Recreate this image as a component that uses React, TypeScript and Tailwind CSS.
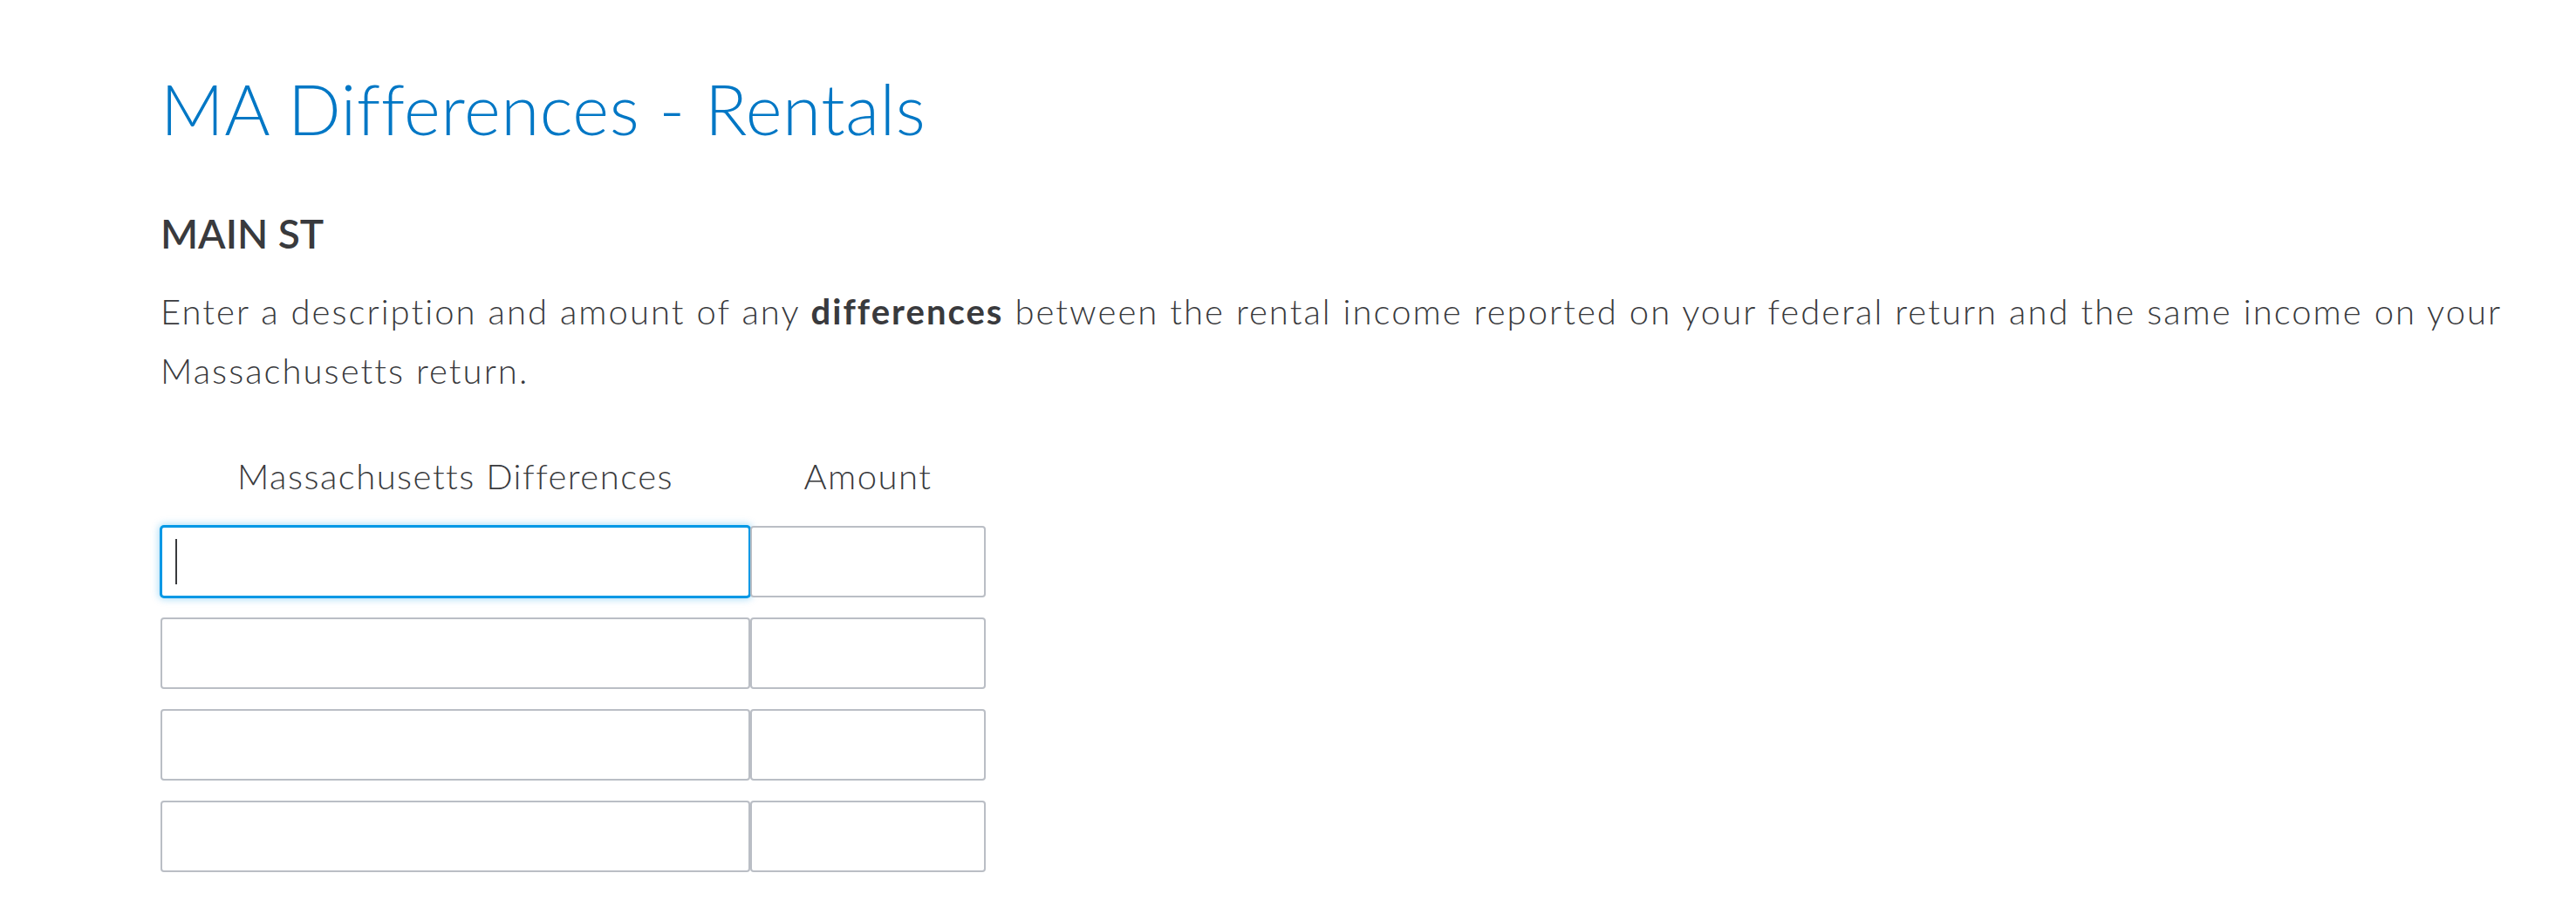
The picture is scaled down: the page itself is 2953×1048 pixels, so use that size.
export default function App() {
  const rows = [0, 1, 2, 3]

  return (
    <div className="min-h-screen bg-white pl-[184px] pt-[76px] font-[Lato,sans-serif] text-[#393a3d]">
      <h1 className="text-[80px] leading-[96px] font-light tracking-[0.6px] text-[#0077c5]">MA Differences - Rentals</h1>

      <h2 className="mt-[68px] text-[46px] leading-[55px] font-semibold">MAIN ST</h2>

      <p className="mt-[28px] max-w-[2740px] text-[40px] leading-[68px] font-light tracking-[2.05px]">
        Enter a description and amount of any <span className="font-bold">differences</span> between the rental income
        reported on your federal return and the same income on your Massachusetts return.
      </p>

      <div className="mt-[53px] w-[946px]">
        <div className="flex text-[40px] leading-[68px] font-light tracking-[1.5px]">
          <div className="w-[676px] text-center">Massachusetts Differences</div>
          <div className="w-[270px] text-center">Amount</div>
        </div>

        <div className="mt-[23px] flex flex-col gap-[23px]">
          {rows.map((i) => (
            <div key={i} className="flex h-[82px]">
              {i === 0 ? (
                <div className="flex w-[676px] items-center rounded-[4px] border-2 border-[#0098e5] bg-white pl-[15px] shadow-[0_0_0_1px_#0098e5,0_0_8px_2px_rgba(0,152,229,0.35)]">
                  <div className="h-[52px] w-[2px] bg-[#393a3d]" />
                </div>
              ) : (
                <div className="w-[676px] rounded-[4px] border-2 border-[#babec5] bg-white" />
              )}
              <div className="w-[270px] rounded-[4px] border-2 border-[#babec5] bg-white" />
            </div>
          ))}
        </div>
      </div>
    </div>
  )
}
